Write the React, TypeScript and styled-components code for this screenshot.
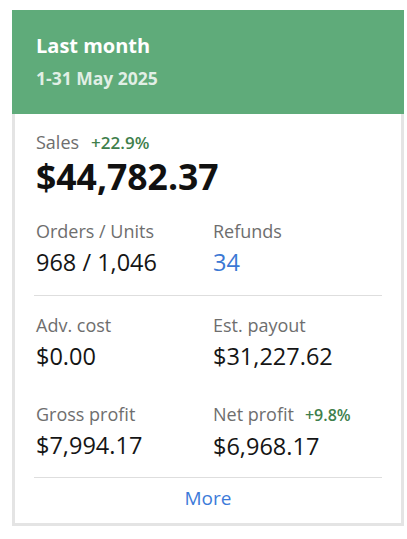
import styled, { createGlobalStyle } from "styled-components";

const GlobalStyle = createGlobalStyle`
  body {
    margin: 10px 0 0 12px;
    background: #ffffff;
    font-family: "Open Sans", "Liberation Sans", sans-serif;
  }
`;

interface Metric {
  label: string;
  value: string;
  change?: string;
  link?: boolean;
}

const topMetrics: Metric[] = [
  { label: "Orders / Units", value: "968 / 1,046" },
  { label: "Refunds", value: "34", link: true },
];

const bottomMetrics: Metric[] = [
  { label: "Adv. cost", value: "$0.00" },
  { label: "Est. payout", value: "$31,227.62" },
  { label: "Gross profit", value: "$7,994.17" },
  { label: "Net profit", value: "$6,968.17", change: "+9.8%" },
];

export default function App() {
  return (
    <>
      <GlobalStyle />
      <Card>
        <Header>
          <Title>Last month</Title>
          <Period>1-31 May 2025</Period>
        </Header>
        <Body>
          <Label>
            Sales <Change>+22.9%</Change>
          </Label>
          <Total>$44,782.37</Total>

          <MetricGrid $top={25}>
            <MetricCells metrics={topMetrics} />
          </MetricGrid>

          <Divider />

          <MetricGrid $top={18}>
            <MetricCells metrics={bottomMetrics} />
          </MetricGrid>

          <Divider $top={16} />
          <MoreLink href="#">More</MoreLink>
        </Body>
      </Card>
    </>
  );
}

const MetricCells = ({ metrics }: { metrics: Metric[] }) => (
  <>
    {metrics.map((m) => (
      <Cell key={m.label}>
        <Label>
          {m.label}
          {m.change && <Change $small>{m.change}</Change>}
        </Label>
        <Value $link={m.link}>{m.value}</Value>
      </Cell>
    ))}
  </>
);

const Card = styled.div`
  width: 392px;
`;

const Header = styled.div`
  background: #5fab7a;
  padding: 23px 24px 24px;
  color: #ffffff;
`;

const Title = styled.div`
  font-size: 20px;
  line-height: 26px;
  font-weight: 700;
`;

const Period = styled.div`
  margin-top: 7px;
  font-size: 17.5px;
  line-height: 24px;
  font-weight: 700;
  color: rgba(255, 255, 255, 0.82);
`;

const Body = styled.div`
  border: 3px solid #e4e4e4;
  border-top: none;
  padding: 17px 19px 13px;
  display: flex;
  flex-direction: column;
`;

const Label = styled.div`
  font-size: 18px;
  line-height: 22px;
  color: #6e6e6e;
  padding-left: 2px;
  display: flex;
  align-items: baseline;
`;

const Change = styled.span<{ $small?: boolean }>`
  margin-left: ${(p) => (p.$small ? 11 : 12)}px;
  font-size: ${(p) => (p.$small ? 16 : 17)}px;
  font-weight: 600;
  color: #3f7f4c;
`;

const Total = styled.div`
  margin-top: 3px;
  padding-left: 2px;
  font-size: 35.5px;
  line-height: 38px;
  font-weight: 700;
  color: #111111;
`;

const MetricGrid = styled.div<{ $top: number }>`
  margin-top: ${(p) => p.$top}px;
  display: grid;
  grid-template-columns: 177px 1fr;
  row-gap: 32px;
`;

const Cell = styled.div`
  display: flex;
  flex-direction: column;
  gap: 5px;
`;

const Value = styled.div<{ $link?: boolean }>`
  padding-left: 2px;
  font-size: 23.5px;
  line-height: 30px;
  color: ${(p) => (p.$link ? "#3b78d4" : "#151515")};
`;

const Divider = styled.hr<{ $top?: number }>`
  margin: ${(p) => p.$top ?? 18}px 0 0;
  border: none;
  border-top: 1px solid #dedede;
  width: 100%;
`;

const MoreLink = styled.a`
  margin-top: 8px;
  align-self: center;
  font-size: 19px;
  line-height: 24px;
  color: #3d7bd9;
  text-decoration: none;
`;
